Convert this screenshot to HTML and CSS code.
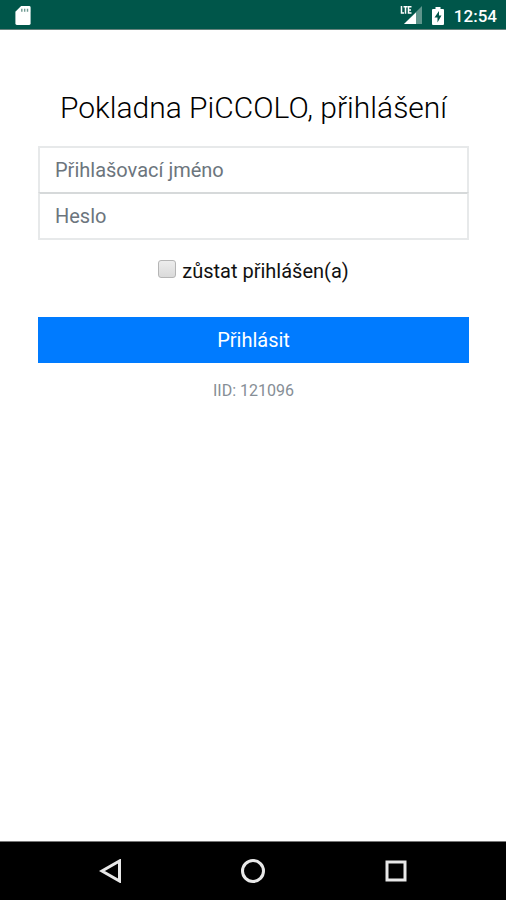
FILE: index.html
```html
<!DOCTYPE html>
<html lang="cs">
<head>
<meta charset="utf-8">
<meta name="viewport" content="width=device-width, initial-scale=1">
<title>Pokladna PiCCOLO</title>
<link rel="stylesheet" href="styles.css">
</head>
<body>
<header class="status">
  <svg class="status-icon" width="16" height="19" viewBox="0 0 16 20" aria-hidden="true">
    <path fill="#fff" d="M6 0h8.500q1.500 0 1.500 1.500v17q0 1.500-1.500 1.500h-13q-1.500 0-1.500-1.500V6z"/>
    <path fill="#6f9a92" d="M6 3h1.500v3H6zM9 3h1.500v3H9zM12 3h1.500v3H12z"/>
  </svg>
  <div class="status-right">
    <svg width="22" height="19" viewBox="0 0 22 19" aria-hidden="true">
      <path fill="#5f958c" d="M22 0v18H4z"/>
      <path fill="#00564a" d="M0 0h13v9H0z"/>
      <path fill="#fff" d="M16 6.500v11.500H4z"/>
      <path fill="none" stroke="#fff" stroke-width="1.500" d="M1.500 0v7H4M3.500 .7h4M5.500 .7v7M11.500 .7H8.500v6.300h3M8.500 4h2.500"/>
    </svg>
    <svg width="12" height="18" viewBox="0 0 12 18" aria-hidden="true">
      <path fill="#fff" d="M3.500 0h5v2H11q1 0 1 1v14q0 1-1 1H1q-1 0-1-1V3q0-1 1-1h2.500z"/>
      <path fill="#00564a" d="M7 4L2.500 10.500h3V15.500L9.500 8.500H7z"/>
    </svg>
    <time class="clock">12:54</time>
  </div>
</header>
<main class="page">
  <form class="login">
    <h1 class="title">Pokladna PiCCOLO, přihlášení</h1>
    <input class="field" type="text" placeholder="Přihlašovací jméno" aria-label="Přihlašovací jméno">
    <input class="field" type="password" placeholder="Heslo" aria-label="Heslo">
    <label class="remember"><input class="check" type="checkbox">zůstat přihlášen(a)</label>
    <button class="submit" type="submit">Přihlásit</button>
    <p class="device">IID: 121096</p>
  </form>
</main>
<nav class="navbar">
  <button class="nav-button" type="button" aria-label="Zpět">
    <svg width="24" height="24" viewBox="0 0 24 24"><path d="M20.500 2v20L3 12z"/></svg>
  </button>
  <button class="nav-button" type="button" aria-label="Domů">
    <svg width="24" height="24" viewBox="0 0 24 24"><circle cx="12" cy="12" r="10.500"/></svg>
  </button>
  <button class="nav-button" type="button" aria-label="Přehled">
    <svg width="24" height="24" viewBox="0 0 24 24"><rect x="3" y="3" width="18" height="18"/></svg>
  </button>
</nav>
</body>
</html>
```
FILE: styles.css
```css
* { box-sizing: border-box; }
body {
  margin: 0;
  min-height: 100vh;
  display: flex;
  flex-direction: column;
  background: #fff;
  color: #212529;
  font-family: Roboto, "Liberation Sans", sans-serif;
  font-size: 20px;
}
.status {
  height: 30px;
  padding: 2px 9px 0 15px;
  display: flex;
  align-items: center;
  justify-content: space-between;
  background: #00564a;
  border-bottom: 1px solid #66827c;
  color: #fff;
}
.status-right { display: flex; align-items: center; gap: 10px; }
.clock { font-size: 17px; font-weight: 500; line-height: 24px; }
.page { flex: 1; padding: 60px 37px 0 38px; }
.login { display: flex; flex-direction: column; }
.title {
  margin: 0 0 20px;
  font-size: 30px;
  font-weight: 300;
  line-height: 36px;
  text-align: center;
  color: #000;
}
.field {
  width: 100%;
  height: 48px;
  margin: 0;
  padding: 0 15px;
  border: 2px solid #e7e9ea;
  border-radius: 0;
  background: #fff;
  color: #495057;
  font: inherit;
}
.field + .field {
  margin-top: -2px;
  border-top-color: #d6d9da;
}
.field::placeholder { color: #6c757d; opacity: 1; }
.remember {
  margin: 17px 0 31px;
  display: flex;
  align-items: center;
  justify-content: center;
  gap: 6px;
  line-height: 29px;
  color: #111;
}
.check {
  appearance: none;
  width: 18px;
  height: 18px;
  margin: 0 0 5px;
  border: 1px solid #b5b5b5;
  border-radius: 3px;
  background: linear-gradient(#ededed, #dadada);
}
.check:checked { background: #007bff; }
.submit {
  height: 46px;
  padding: 0;
  border: 0;
  background: #007bff;
  color: #fff;
  font: inherit;
}
.device {
  margin: 16px 0 0;
  font-size: 16px;
  line-height: 24px;
  text-align: center;
  color: #868e96;
}
.navbar {
  height: 59px;
  padding: 0 39px 0 40px;
  display: flex;
  background: #000;
  border-top: 1px solid #777;
}
.nav-button {
  flex: 1;
  padding: 0;
  display: flex;
  align-items: center;
  justify-content: center;
  border: 0;
  background: none;
}
.nav-button svg { fill: none; stroke: #e8e8e8; stroke-width: 3; }
```
